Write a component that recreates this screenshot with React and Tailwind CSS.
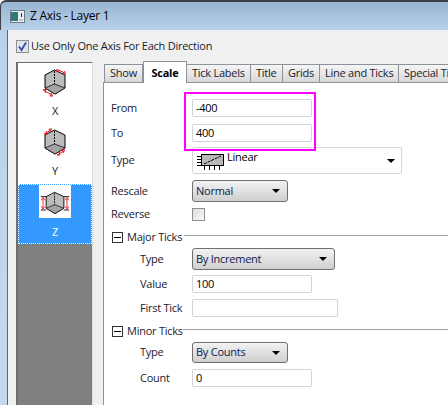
const FONT = "font-['Open_Sans','Noto_Sans',sans-serif] tracking-[-0.25px]";

function Cube({ axis }) {
  return (
    <svg width="36" height="36" viewBox="-1 0 36 36" fill="none">
      <path d="M16.500 7 L7 12 V25 L17 31 L27 25 V12 Z" fill="#bcbcbc" stroke="#000" strokeWidth="1" />
      <path d="M16.500 21 L7 25 L17 31 L27 25 Z" fill="#a4a4a4" stroke="#111" strokeWidth="0.8" />
      <path d="M16.500 8 V21" stroke="#000" strokeWidth="1" strokeDasharray="2 1" />
      {axis === "z" && (
        <g>
          <path d="M3.500 14 V25 M30.500 14 V25" stroke="#e8141c" strokeWidth="1" />
          <path d="M1.500 16 L3.500 13 L5.500 16 M1.500 23 L3.500 26 L5.500 23 M28.500 16 L30.500 13 L32.500 16 M28.500 23 L30.500 26 L32.500 23" stroke="#e8141c" />
          <path d="M1 12 H7 M1 27 H7 M27 12 H33 M27 27 H33" stroke="#000" />
        </g>
      )}
      {axis === "x" && (
        <g>
          <path d="M19 6.500 L28 10.500 M5 27 L15 32.500" stroke="#e8141c" strokeWidth="1" />
          <path d="M19 6 V9 L22 7 M28 11 L25 11 L27 8 M5 27 L8 26 L7 30 M15 33 L12 33 L14 30" stroke="#e8141c" />
        </g>
      )}
      {axis === "y" && (
        <g>
          <path d="M6 11 L14 6.500 M19 32 L27 27.500" stroke="#e8141c" strokeWidth="1" />
          <path d="M6 11 L9 11 L8 8 M14 6 L11 6 L13 9 M19 32 L22 32 L21 29 M27 27 L24 27 L26 30" stroke="#e8141c" />
        </g>
      )}
    </svg>
  );
}

function Field({ label, value, width = "w-[120px]", indent = "pl-[7px]", spacing }) {
  return (
    <div className={`flex h-[18px] items-center ${spacing}`}>
      <span className={`w-[88px] ${indent} text-[11px] text-[#1a1a2e]`}>{label}</span>
      <div className={`${width} flex h-[18px] items-center rounded-[2px] border border-[#cfd5da] bg-white pl-[3px] text-[11px] text-black`}>{value}</div>
    </div>
  );
}

function Select({ label, value, width, height = "h-[22px]", indent = "pl-[7px]", spacing }) {
  return (
    <div className={`flex ${height} items-center ${spacing}`}>
      <span className={`w-[88px] ${indent} text-[11px] text-[#1a1a2e]`}>{label}</span>
      <div className={`${width} ${height} flex items-center justify-between rounded-[3px] border border-[#707070] bg-gradient-to-b from-[#f2f2f2] to-[#cfcfcf] pl-[3px] pr-[7px] text-[11px] text-[#0a1a50]`}>
        {value}
        <span className="h-0 w-0 border-x-[4px] border-t-[4px] border-x-transparent border-t-black" />
      </div>
    </div>
  );
}

function Group({ title, titleWidth, spacing }) {
  return (
    <div className={`flex h-[11px] items-center pl-[8px] ${spacing}`}>
      <span className="relative h-[11px] w-[11px] shrink-0 border border-[#333] bg-white">
        <span className="absolute left-[1px] top-[4px] h-[1px] w-[7px] bg-black" />
      </span>
      <span className={`ml-[4px] ${titleWidth} whitespace-nowrap text-[11px] text-[#1a1a2e]`}>{title}</span>
      <span className="mb-[4px] h-[1px] flex-1 bg-[#a0a0a0]" />
    </div>
  );
}

function Tab({ label, active, width }) {
  return active ? (
    <div className={`${width} z-10 -mb-[1px] flex h-[22px] shrink-0 items-start justify-center border-x border-t border-[#8c919a] bg-white pt-[3px] text-[11px] font-bold text-black`}>
      {label}
    </div>
  ) : (
    <div className={`${width} flex h-[18px] shrink-0 items-center whitespace-nowrap border-r border-t border-[#8c919a] bg-gradient-to-b from-[#f5f5f5] to-[#d8d8d8] pl-[5px] text-[11px] text-[#1a1a2e]`}>
      {label}
    </div>
  );
}

function AxisItem({ axis, label, selected }) {
  return selected ? (
    <div className="flex h-[60px] flex-col items-center border border-dotted border-white bg-[#3399ff]">
      <div className="flex h-[33px] w-[32px] items-center justify-center overflow-hidden bg-white">
        <Cube axis={axis} />
      </div>
      <span className="mt-[6px] text-[11px] text-white">{label}</span>
    </div>
  ) : (
    <div className="flex h-[60px] flex-col items-center">
      <Cube axis={axis} />
      <span className="mt-[4px] text-[11px] text-[#1a1a2e]">{label}</span>
    </div>
  );
}

export default function App() {
  return (
    <div className={`${FONT} flex h-[405px] w-[448px] flex-col overflow-hidden bg-white`}>
      {/* Title bar */}
      <div className="flex h-[30px] shrink-0 items-center rounded-tl-[6px] border-l border-t-2 border-[#3c3f44] bg-gradient-to-b from-[#98b4d2] to-[#b9d2ea] pl-[9px]">
        <svg width="15" height="13" viewBox="0 0 15 13">
          <rect x="0.5" y="0.5" width="14" height="12" fill="#e8eef2" stroke="#6a7a86" />
          <rect x="1" y="2" width="7" height="9" fill="#2f7a72" />
          <rect x="11" y="3" width="1" height="4" fill="#333" />
          <rect x="9" y="9" width="4" height="2" fill="#b8c4cc" />
        </svg>
        <span className="ml-[5px] text-[12px] text-black">Z Axis - Layer 1</span>
      </div>

      <div className="flex min-h-0 flex-1">
        <div className="w-[8px] shrink-0 border-r border-[#5a6a78] bg-gradient-to-b from-[#b9d2ea] to-[#c4d9ee]" />
        <div className="flex min-w-0 flex-1 flex-col bg-[#f0f0f0] pl-[8px]">
          {/* Top option */}
          <div className="flex h-[32px] shrink-0 items-center">
            <span className="flex h-[13px] w-[13px] items-center justify-center border border-[#8e8f8f] bg-[#dde4ee]">
              <svg width="11" height="11" viewBox="0 0 11 11" fill="none">
                <path d="M2 5.500 L4.500 9 L9 1.500" stroke="#3a4aa8" strokeWidth="1.8" />
              </svg>
            </span>
            <span className="ml-[2px] text-[11px] text-[#1a1a2e]">Use Only One Axis For Each Direction</span>
          </div>

          <div className="flex min-h-0 flex-1">
            {/* Axis list */}
            <div className="flex w-[77px] shrink-0 flex-col border-l-2 border-r border-t border-l-[#6e6e6e] border-r-[#e0e0e0] border-t-[#6e6e6e] bg-white">
              <AxisItem axis="x" label="X" />
              <AxisItem axis="y" label="Y" />
              <div className="h-[1px]" />
              <AxisItem axis="z" label="Z" selected />
              <div className="flex-1 bg-[#808080]" />
            </div>

            {/* Tabs */}
            <div className="ml-[10px] flex min-w-0 flex-1 flex-col">
              <div className="flex h-[20px] shrink-0 items-end whitespace-nowrap">
                <div className="w-[1px] shrink-0" />
                <Tab label="Show" width="w-[39px] border-l" />
                <Tab label="Scale" width="w-[44px]" active />
                <Tab label="Tick Labels" width="w-[64px]" />
                <Tab label="Title" width="w-[32px]" />
                <Tab label="Grids" width="w-[37px]" />
                <Tab label="Line and Ticks" width="w-[79px]" />
                <div className="flex h-[18px] min-w-0 flex-1 items-center overflow-hidden whitespace-nowrap border-t border-[#8c919a] bg-gradient-to-b from-[#f5f5f5] to-[#d8d8d8] pl-[5px] text-[11px] text-[#1a1a2e]">
                  Special Ticks
                </div>
              </div>
              <div className="relative flex-1 border-l border-t border-[#8c919a] bg-white">
                <Field label="From" value="-400" spacing="mt-[16px]" />
                <Field label="To" value="400" spacing="mt-[7px]" />
                <div className="mt-[5px] flex h-[27px] items-center">
                  <span className="w-[88px] pl-[7px] text-[11px] text-[#1a1a2e]">Type</span>
                  <div className="flex h-[27px] w-[210px] items-start justify-between rounded-[2px] border border-[#d4d8dc] pl-[4px] pr-[3px]">
                    <div className="flex">
                      <svg width="28" height="18" viewBox="0 0 28 18" className="mt-[5px]">
                        <rect x="4.500" y="1.500" width="22" height="11" fill="#b8b8b8" stroke="#000" />
                        <path d="M7 11 L24 3" stroke="#000" strokeDasharray="3 1" />
                        <path d="M0 3.500 H4 M0 6.500 H4 M0 9.500 H4 M0 12.500 H4 M7.500 13 V17 M12.500 13 V17 M17.500 13 V17 M22.500 13 V17" stroke="#000" />
                      </svg>
                      <span className="ml-[2px] text-[11px] leading-[18px] text-black">Linear</span>
                    </div>
                    <span className="mr-[3px] mt-[11px] h-0 w-0 border-x-[4px] border-t-[4px] border-x-transparent border-t-black" />
                  </div>
                </div>
                <Select label="Rescale" value="Normal" width="w-[96px]" spacing="mt-[6px]" />
                <div className="mt-[6px] flex h-[13px] items-center">
                  <span className="w-[88px] pl-[7px] text-[11px] text-[#1a1a2e]">Reverse</span>
                  <span className="h-[13px] w-[13px] border border-[#8e8f8f] bg-gradient-to-br from-[#dedede] to-[#f8f8f8]" />
                </div>
                <Group title="Major Ticks" titleWidth="w-[57px]" spacing="mt-[11px]" />
                <Select label="Type" value="By Increment" width="w-[143px]" indent="pl-[36px]" spacing="mt-[5px]" />
                <Field label="Value" value="100" indent="pl-[36px]" spacing="mt-[5px]" />
                <Field label="First Tick" value="" width="w-[146px]" indent="pl-[36px]" spacing="mt-[6px]" />
                <Group title="Minor Ticks" titleWidth="w-[56px]" spacing="mt-[9px]" />
                <Select label="Type" value="By Counts" width="w-[96px]" height="h-[21px]" indent="pl-[36px]" spacing="mt-[5px]" />
                <Field label="Count" value="0" indent="pl-[36px]" spacing="mt-[6px]" />

                {/* Highlight */}
                <div className="absolute left-[80px] top-[9px] h-[59px] w-[132px] border-2 border-[#ff00ff]" />
              </div>
            </div>
          </div>
        </div>
      </div>
    </div>
  );
}
